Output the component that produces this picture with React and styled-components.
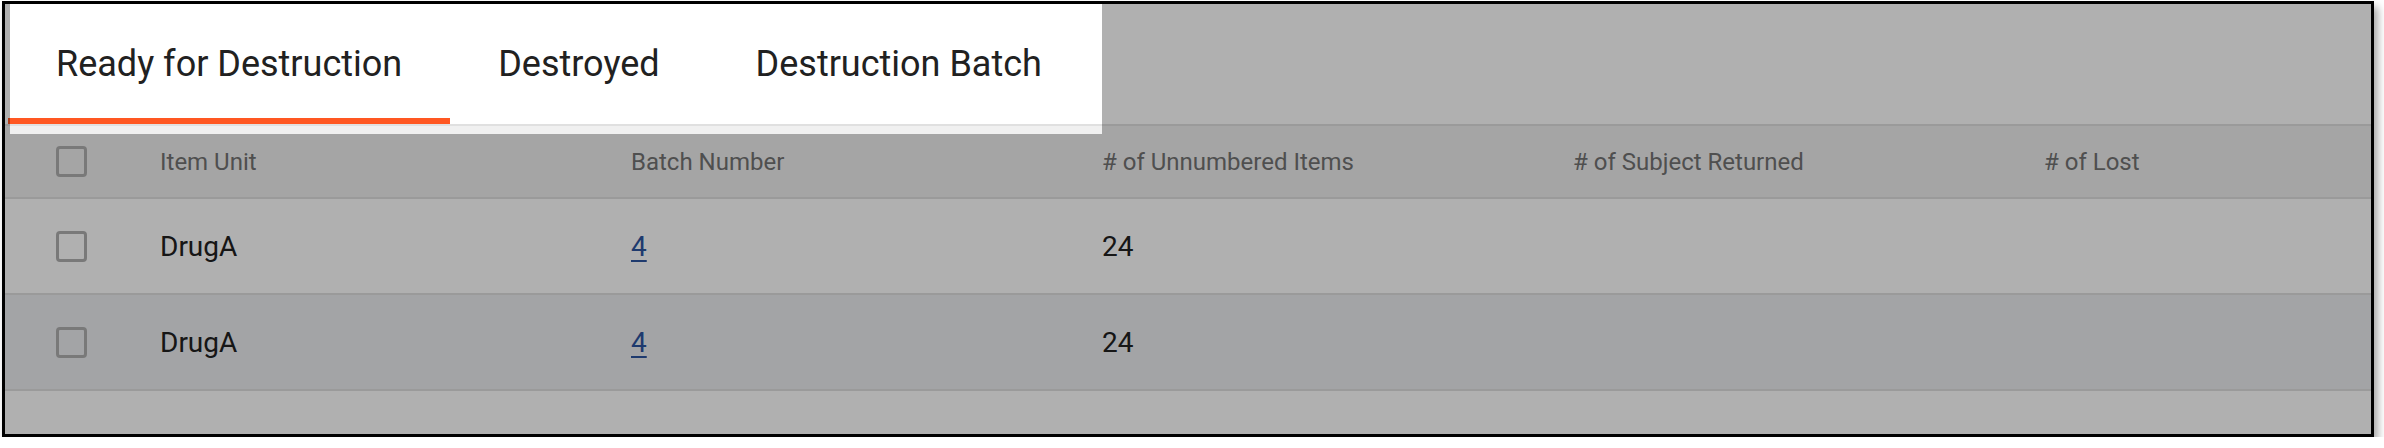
import styled, { createGlobalStyle } from "styled-components";

const GlobalStyle = createGlobalStyle`
    body {
        margin: 0;
        background: #fff;
        font-family: Roboto, "Liberation Sans", Arial, sans-serif;
    }
`;

const Page = styled.div`
    padding: 1px 0 0 2px;
`;

const Frame = styled.div`
    position: relative;
    width: 2366px;
    height: 430px;
    border: 3px solid #000;
    background: #fff;
    overflow: hidden;
    box-shadow: 4px 6px 8px rgba(0, 0, 0, 0.35);
`;

const TabBar = styled.div`
    display: flex;
    height: 120px;
    padding-left: 3px;
    border-bottom: 2px solid #e0e0e0;
`;

const Tab = styled.div`
    position: relative;
    display: flex;
    align-items: center;
    padding: 0 48px;
    font-size: 36px;
    color: #212121;
    white-space: nowrap;

    &::after {
        content: "";
        position: absolute;
        left: 0;
        right: 0;
        bottom: 0;
        height: 6px;
        background: ${(props) => (props.$active ? "#ff5722" : "transparent")};
    }
`;

const Row = styled.div`
    display: grid;
    grid-template-columns: 155px repeat(4, 471px) 1fr;
    align-items: center;
    height: ${(props) => (props.$head ? "71px" : "94px")};
    background: ${(props) => props.$bg || "#fff"};
    border-bottom: 2px solid #e0e0e0;
    font-size: ${(props) => (props.$head ? "24px" : "28px")};
    color: ${(props) => (props.$head ? "#737373" : "#212121")};
`;

const CheckCell = styled.div`
    padding-left: 51px;
    display: flex;
    align-items: center;
`;

const Box = styled.span`
    display: block;
    width: 31px;
    height: 31px;
    box-sizing: border-box;
    border: 3px solid #b0b0b0;
    border-radius: 4px;
`;

const Cell = styled.div`
    white-space: nowrap;
`;

const BatchLink = styled.a`
    color: #2c55a0;
    text-decoration: underline;
    text-underline-offset: 4px;
    cursor: pointer;
`;

// tour highlight around the tab strip
const Spotlight = styled.div`
    position: absolute;
    left: 5px;
    top: -10px;
    width: 1092px;
    height: 140px;
    pointer-events: none;
    box-shadow: 0 0 0 4000px rgba(0, 0, 0, 0.31);
`;

const rows = [
    { unit: "DrugA", batch: 4, unnumbered: 24, bg: "#fff" },
    { unit: "DrugA", batch: 4, unnumbered: 24, bg: "#eceef1" },
];

const App = () => {
    return (
        <>
            <GlobalStyle />
            <Page>
                <Frame>
                    <TabBar>
                        <Tab $active>Ready for Destruction</Tab>
                        <Tab>Destroyed</Tab>
                        <Tab>Destruction Batch</Tab>
                    </TabBar>
                    <Row $head $bg="#f0f0f0">
                        <CheckCell><Box /></CheckCell>
                        <Cell>Item Unit</Cell>
                        <Cell>Batch Number</Cell>
                        <Cell># of Unnumbered Items</Cell>
                        <Cell># of Subject Returned</Cell>
                        <Cell># of Lost</Cell>
                    </Row>
                    {rows.map((r, i) => (
                        <Row key={i} $bg={r.bg}>
                            <CheckCell><Box /></CheckCell>
                            <Cell>{r.unit}</Cell>
                            <Cell><BatchLink>{r.batch}</BatchLink></Cell>
                            <Cell>{r.unnumbered}</Cell>
                            <Cell></Cell>
                            <Cell></Cell>
                        </Row>
                    ))}
                    <Spotlight />
                </Frame>
            </Page>
        </>
    );
};

export default App;
